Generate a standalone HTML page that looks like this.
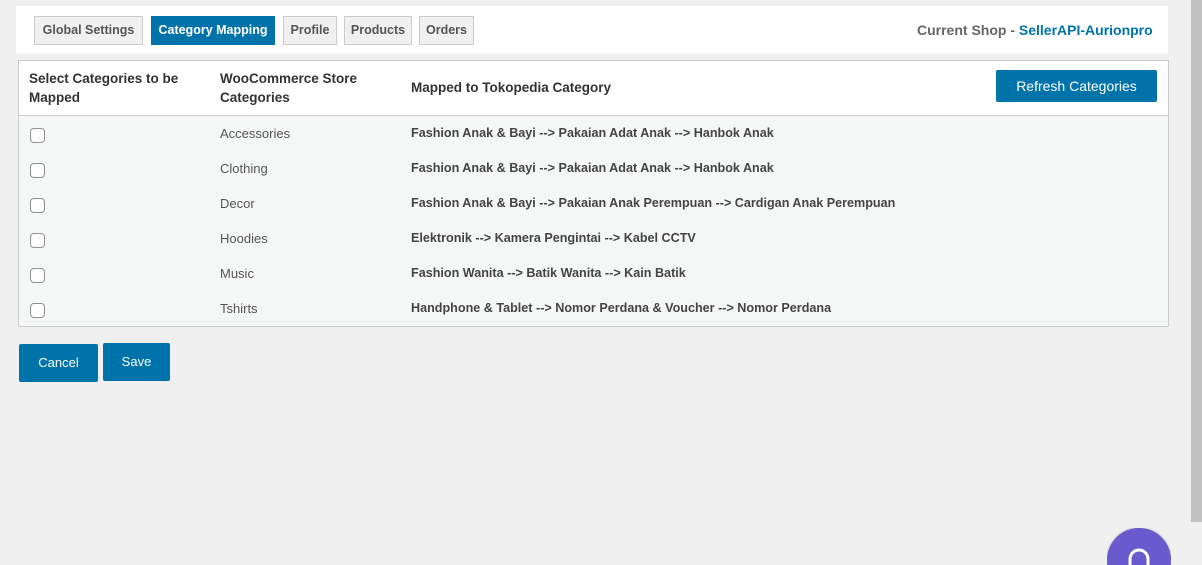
<!DOCTYPE html>
<html><head><meta charset="utf-8"><style>
*{margin:0;padding:0;box-sizing:border-box}
html{width:1202px;height:565px;overflow:hidden}
body{width:1202px;height:565px;background:#f0f0f0;font-family:"Liberation Sans",sans-serif;position:relative;overflow:hidden;color:#333}
.abs{position:absolute}
.hdr{left:16px;top:6px;width:1152px;height:48px;background:#fff}
.tab{position:absolute;top:16px;height:29px;border:1px solid #ccc;background:#f0f0f0;font-size:12.5px;font-weight:bold;color:#555;line-height:27px;text-align:center}
.tab.on{background:#0073aa;color:#fff;border-color:#0073aa}
.tbl{left:18px;top:60px;width:1151px;height:267px;border:1px solid #ccc;background:#f5f7f6}
.thead{position:absolute;left:0;top:0;width:100%;height:55px;background:#fff;border-bottom:1px solid #ccc}
.th{position:absolute;font-size:13.5px;font-weight:bold;color:#333;line-height:19px}
.cb{position:absolute;left:11px;width:15px;height:15px;border:1px solid #8c8f94;border-radius:4px;background:#fff}
.cat{position:absolute;left:201px;font-size:13px;color:#555}
.map{position:absolute;left:392px;font-size:12.6px;font-weight:bold;color:#444}
.btn{position:absolute;background:#0073aa;color:#fff;font-size:13px;text-align:center;border-radius:2px}
</style></head><body>
<div class="abs hdr"></div>
<div class="tab" style="left:34px;width:109px">Global Settings</div>
<div class="tab on" style="left:151px;width:124px">Category Mapping</div>
<div class="tab" style="left:283px;width:54px">Profile</div>
<div class="tab" style="left:344px;width:68px">Products</div>
<div class="tab" style="left:419px;width:55px">Orders</div>
<div class="abs" style="left:917px;top:22px;font-size:14px;font-weight:bold;color:#666">Current Shop - <span style="color:#0073aa">SellerAPI-Aurionpro</span></div>
<div class="abs tbl">
<div class="thead">
<div class="th" style="left:10px;top:8px">Select Categories to be<br>Mapped</div>
<div class="th" style="left:201px;top:8px">WooCommerce Store<br>Categories</div>
<div class="th" style="left:392px;top:17px">Mapped to Tokopedia Category</div>
<div class="btn" style="left:977px;top:9px;width:161px;height:32px;line-height:32px;font-size:14px">Refresh Categories</div>
</div>
<div class="cb" style="top:67px"></div><div class="cat" style="top:65px">Accessories</div><div class="map" style="top:65px">Fashion Anak &amp; Bayi --&gt; Pakaian Adat Anak --&gt; Hanbok Anak</div>
<div class="cb" style="top:102px"></div><div class="cat" style="top:100px">Clothing</div><div class="map" style="top:100px">Fashion Anak &amp; Bayi --&gt; Pakaian Adat Anak --&gt; Hanbok Anak</div>
<div class="cb" style="top:137px"></div><div class="cat" style="top:135px">Decor</div><div class="map" style="top:135px">Fashion Anak &amp; Bayi --&gt; Pakaian Anak Perempuan --&gt; Cardigan Anak Perempuan</div>
<div class="cb" style="top:172px"></div><div class="cat" style="top:170px">Hoodies</div><div class="map" style="top:170px">Elektronik --&gt; Kamera Pengintai --&gt; Kabel CCTV</div>
<div class="cb" style="top:207px"></div><div class="cat" style="top:205px">Music</div><div class="map" style="top:205px">Fashion Wanita --&gt; Batik Wanita --&gt; Kain Batik</div>
<div class="cb" style="top:242px"></div><div class="cat" style="top:240px">Tshirts</div><div class="map" style="top:240px">Handphone &amp; Tablet --&gt; Nomor Perdana &amp; Voucher --&gt; Nomor Perdana</div>
</div>
<div class="btn" style="left:19px;top:344px;width:79px;height:38px;line-height:38px">Cancel</div>
<div class="btn" style="left:103px;top:343px;width:67px;height:38px;line-height:38px">Save</div>
<div class="abs" style="left:1191px;top:0;width:11px;height:522px;background:#c1c1c1"></div>
<div class="abs" style="left:1107px;top:528px;width:64px;height:37px;overflow:hidden"><div style="width:64px;height:64px;border-radius:50%;background:#6a5acd;box-shadow:0 0 2px #999"></div></div>
<svg class="abs" style="left:1124px;top:548px" width="30" height="17" viewBox="0 0 30 17"><path d="M6 17 V11 a9 9 0 0 1 18 0 V17" fill="none" stroke="#fff" stroke-width="3"/></svg>
</body></html>
